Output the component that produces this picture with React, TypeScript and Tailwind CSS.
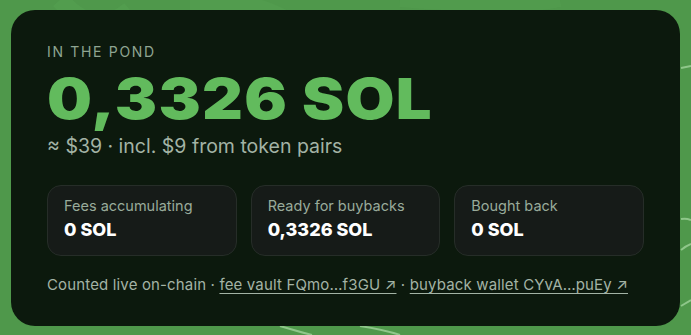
import React from "react";

const stats = [
  { label: "Fees accumulating", value: "0 SOL" },
  { label: "Ready for buybacks", value: "0,3326 SOL" },
  { label: "Bought back", value: "0 SOL" },
];

export default function App() {
  return (
    <div
      className="relative min-h-[335px] w-full overflow-hidden bg-[#4f984b] px-[11px] pt-[10px] pb-[9px]"
      style={{ fontFamily: "Inter, 'Noto Sans', sans-serif" }}
    >
      {/* background decoration */}
      <svg
        className="absolute inset-0 h-full w-full"
        viewBox="0 0 691 335"
        fill="none"
        aria-hidden
      >
        <circle cx="117" cy="17" r="5" fill="#6cb266" opacity="0.7" />
        <path d="M60 0 Q 95 40 130 10" stroke="#5aa555" strokeWidth="18" opacity="0.35" />
        <path d="M190 0 Q 260 0 300 30" stroke="#5aa455" strokeWidth="20" opacity="0.3" />
        <path d="M400 0 Q 520 10 560 0" stroke="#58a253" strokeWidth="14" opacity="0.25" />
        <path d="M681 68 L 691 66" stroke="#8fc78a" strokeWidth="2" />
        <path d="M681 219 Q 686 218 691 220" stroke="#8fc78a" strokeWidth="2" />
        <path d="M681 250 Q 686 246 691 244" stroke="#8fc78a" strokeWidth="2" />
        <path d="M681 306 Q 686 303 691 300" stroke="#8fc78a" strokeWidth="2" />
        <path d="M280 326 Q 300 332 312 335" stroke="#8fc78a" strokeWidth="2" />
        <path d="M360 326 Q 385 330 400 335" stroke="#8fc78a" strokeWidth="2" />
      </svg>

      <section className="relative rounded-[24px] bg-[#0c190d] px-[36px] pt-[32px] pb-[31px]">
        <p className="text-[14px] leading-5 tracking-[0.12em] text-[#8fa592] uppercase">
          In the pond
        </p>
        <h1 className="mt-[8px] text-[57px] leading-none font-black tracking-[0.02em] text-[#62bb5d]">
          <span className="inline-block origin-left scale-x-[1.11]">0,3326 SOL</span>
        </h1>
        <p className="mt-[5px] text-[19.5px] leading-7 text-[#a3b3a5]">
          ≈ $39 · incl. $9 from token pairs
        </p>

        <div className="mt-[25px] grid grid-cols-3 gap-[14px]">
          {stats.map((s) => (
            <div
              key={s.label}
              className="rounded-[14px] border border-[#262d28] bg-[#161b18] px-[16px] pt-[10px] pb-[13px]"
            >
              <p className="text-[14.5px] leading-5 text-[#99ab9b]">{s.label}</p>
              <p className="mt-[2px] text-[18px] leading-6 font-extrabold text-white">
                {s.value}
              </p>
            </div>
          ))}
        </div>

        <p className="mt-[19px] text-[15px] leading-5 tracking-[0.01em] text-[#a3b3a5]">
          Counted live on-chain ·{" "}
          <a className="underline decoration-[#a3b3a5] underline-offset-[3px]" href="#">
            fee vault FQmo…f3GU ↗
          </a>{" "}
          ·{" "}
          <a className="underline decoration-[#a3b3a5] underline-offset-[3px]" href="#">
            buyback wallet CYvA…puEy ↗
          </a>
        </p>
      </section>
    </div>
  );
}
